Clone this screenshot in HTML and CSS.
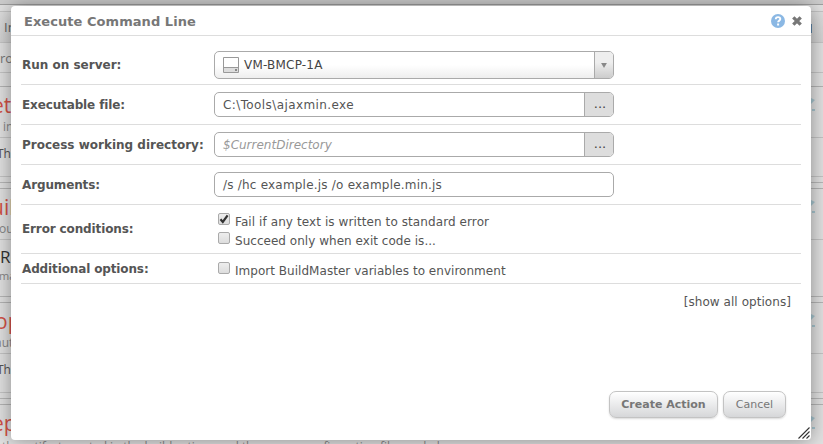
FILE: index.html
```
<!DOCTYPE html>
<html lang="en">
<head>
<meta charset="utf-8">
<title>Execute Command Line</title>
<link rel="stylesheet" href="styles.css">
</head>
<body>
<svg class="defs" width="0" height="0"><symbol id="edit" viewBox="0 0 12 14"><path d="M0 7l3-5 2-2 4 2-4 4-3 3z"/><path d="M3 11h2v2H3zM6 11h3v2H6z"/></symbol></svg>
<div class="page">
  <div class="strip"></div>
  <div class="gap"></div>
  <div class="nav"><span>In</span><i></i></div>
  <div class="crumb"><span>roc</span></div>
  <div class="space"></div>
  <section class="card"><header><h2 class="i0">et</h2><small class="in">in</small><svg class="edit"><use href="#edit"/></svg></header><p class="desc">The</p></section>
  <section class="card tall"><header><h2 class="i1">uild</h2><small>out</small><svg class="edit"><use href="#edit"/></svg></header><div class="detail"><b>Re</b><small>ma</small></div></section>
  <section class="card"><header><h2>op</h2><small class="i1">aut</small><svg class="edit"><use href="#edit"/></svg></header><p class="desc">The</p></section>
  <section class="card"><header><h2 class="i2">ep</h2><small class="last">the artifact created in the build actions and the source configuration files and plan</small><svg class="edit"><use href="#edit"/></svg></header></section>
</div>
<main class="dialog">
  <header class="title"><h1>Execute Command Line</h1>
    <svg class="help" viewBox="0 0 14 14"><circle cx="7" cy="7" r="7" fill="#8bb8e4"/><path d="M4.8 5.2c0-3 4.5-2.6 4.5-.1 0 1.6-2.2 1.5-2.2 3.2M6.1 10.5h2" fill="none" stroke="#fff" stroke-width="1.9"/></svg>
    <svg class="close" viewBox="0 0 10 10"><path d="M1.3 1.3l7.4 7.4M8.7 1.3L1.3 8.7" stroke="#777" stroke-width="3.3"/></svg>
  </header>
  <div class="form">
    <div class="row first"><label><span>Run on server:</span></label><div class="field select"><svg class="server" viewBox="0 0 16 16"><path d="M.5.5h15v15H.5z" fill="#fff" stroke="#999"/><path d="M1 11h14v4H1z" fill="#ddd"/><path d="M1 10.5h14" stroke="#999"/><path d="M12 12h2v2h-2z" fill="#888"/></svg><span class="server-name">VM-BMCP-1A</span><div class="arrow"><svg viewBox="0 0 7 6"><path d="M0 0h7L3.5 6z" fill="#888"/></svg></div></div></div>
    <div class="row"><label><span class="tight">Executable file:</span></label><div class="field"><span class="path">C:\Tools\ajaxmin.exe</span><div class="browse">...</div></div></div>
    <div class="row"><label><span>Process working directory:</span></label><div class="field"><em>$CurrentDirectory</em><div class="browse">...</div></div></div>
    <div class="row"><label><span class="tight">Arguments:</span></label><div class="field"><span class="args">/s /hc example.js /o example.min.js</span></div></div>
    <div class="row errors"><label><span class="tight">Error conditions:</span></label><div class="checks"><div class="check"><i><svg viewBox="0 0 10 10"><path d="M1.5 5.2l2.3 2.7L8.6 1.3" fill="none" stroke="#333" stroke-width="2.2"/></svg></i><span class="wide">Fail if any text is written to standard error</span></div><div class="check"><i></i><span>Succeed only when exit code is...</span></div></div></div>
    <div class="row options"><label><span class="tight">Additional options:</span></label><div class="checks"><div class="check"><i></i><span>Import BuildMaster variables to environment</span></div></div></div>
  </div>
  <div class="show"><span>[show all options]</span></div>
  <footer><button class="primary">Create Action</button><button class="cancel">Cancel</button></footer>
  <svg class="resize" viewBox="0 0 12 12"><path d="M.5 11.5l11-11M4.5 11.5l7-7M8.5 11.5l3-3" stroke="#333" stroke-width="1.1"/></svg>
</main>
</body>
</html>
```
FILE: styles.css
```
* { box-sizing: border-box; }
body { margin: 0; width: 823px; height: 444px; overflow: hidden; position: relative; font: 12px "DejaVu Sans", sans-serif; color: #555; background: #e2e2e2; }
h1, h2, p { margin: 0; font-weight: normal; }
.defs { position: absolute; }
.page { height: 444px; overflow: hidden; font-family: "Open Sans", sans-serif; }
.strip { height: 5px; background: #cdcdcd; border-bottom: 1px solid #a0a0a0; }
.gap { height: 7px; border-bottom: 1px solid #c4c4c4; }
.nav { height: 31px; background: linear-gradient(#dedede, #d3d3d3); border-bottom: 1px solid #c5c5c5; padding: 5px 0 0 4px; font-size: 13px; line-height: 20px; color: #666; display: flex; justify-content: space-between; }
.nav i { width: 12px; height: 9px; margin-top: 7px; background: linear-gradient(90deg, #5f86a8 1px, transparent 1px); }
.crumb { height: 30px; border-bottom: 1px solid #c5c5c5; padding-top: 6px; font-size: 13px; line-height: 18px; color: #777; }
.space { height: 13px; }
.card { height: 97px; border-top: 1px solid #b5b5b5; border-bottom: 1px solid #b8b8b8; margin-bottom: 5px; }
.card header { height: 51px; border-bottom: 1px solid #c5c5c5; position: relative; overflow: hidden; padding-top: 5px; }
.card h2 { font-size: 21px; line-height: 26px; color: #d45247; margin-left: -5px; }
.card h2.i0 { margin-left: -8px; }
.card h2.i1 { margin-left: -9px; }
.card h2.i2 { margin-left: -8px; }
.card small { display: block; font-size: 12px; line-height: 16px; margin: 1px 0 0 -1px; color: #888; }
.card small.in { margin-left: 3px; }
.card small.i1 { margin-left: -5px; }
.card small.last { margin: 3px 0 0 2px; font-size: 12px; letter-spacing: -.08px; white-space: nowrap; }
.edit { position: absolute; right: 5px; top: 11px; width: 12px; height: 14px; fill: #a8c6d0; }
.card .desc { height: 39px; border-bottom: 1px solid #c5c5c5; padding: 6px 0 0 0; margin-left: -3px; font-size: 12px; line-height: 20px; }
.card.tall { height: 109px; }
.detail { height: 51px; }
.detail b { display: block; font-weight: normal; font-size: 17px; line-height: 23px; padding-top: 5px; color: #333; }
.card .detail small { margin-top: 0; font-size: 11px; }
.dialog { position: absolute; left: 11px; top: 6px; width: 800px; height: 434px; background: #fff; border-radius: 4px; box-shadow: 0 0 20px rgba(0,0,0,.4); }
.title { height: 30px; border-bottom: 1px solid #ddd; display: flex; align-items: center; padding: 0 9px 0 13px; }
.title h1 { flex: 1; font-size: 13px; line-height: 20px; font-weight: bold; letter-spacing: .05px; padding-top: 2px; color: #777; }
.help { width: 14px; height: 14px; margin-right: 7px; }
.close { width: 10px; height: 10px; }
.form { margin: 0 10px; }
.row { height: 40px; display: flex; align-items: center; border-bottom: 1px solid #ddd; }
.row.first { height: 49px; padding-top: 9px; }
.row label { width: 193px; padding-left: 1px; font-size: 12px; font-weight: bold; line-height: 18px; white-space: nowrap; }
.tight { letter-spacing: -.13px; }
.row.errors { height: 49px; }
.row.options { height: 30px; }
.field { width: 400px; height: 25px; border: 1px solid #aaa; border-radius: 5px; display: flex; align-items: center; padding-left: 8px; background: #fff; overflow: hidden; white-space: nowrap; }
.field em { color: #999; }
.path { letter-spacing: .4px; }
.args { letter-spacing: .21px; }
.select { height: 28px; background: linear-gradient(#fff 50%, #eee); color: #444; }
.server { width: 16px; height: 16px; margin-right: 5px; }
.server-name { letter-spacing: .2px; padding-top: 1px; }
.arrow { width: 19px; height: 26px; margin-left: auto; border-left: 1px solid #aaa; background: linear-gradient(#eee 40%, #ccc); display: grid; place-items: center; }
.arrow svg { width: 6px; height: 5px; margin-top: 2px; }
.browse { width: 29px; height: 23px; margin-left: auto; padding-left: 2px; border-left: 1px solid #aaa; background: #ddd; text-align: center; line-height: 22px; font-size: 13px; color: #444; }
.checks { padding-left: 4px; }
.check { height: 19px; display: flex; align-items: flex-start; line-height: 19px; white-space: nowrap; }
.check span { padding-top: 3px; letter-spacing: .03px; }
.check span.wide { letter-spacing: .09px; }
.check i { width: 12px; height: 12px; border: 1px solid #aaa; border-radius: 2px; background: linear-gradient(#eee, #ddd); margin: 3px 5px 0 0; display: grid; place-items: center; }
.check i svg { width: 10px; height: 10px; }
.show { height: 36px; padding: 9px 20px 0 0; text-align: right; line-height: 18px; letter-spacing: .06px; }
footer { height: 27px; margin-top: 71px; display: flex; justify-content: flex-end; gap: 5px; padding-right: 25px; }
button { height: 27px; border: 1px solid #c3c3c3; border-radius: 7px; padding: 0; font: 11px "DejaVu Sans", sans-serif; color: #777; background: linear-gradient(#fff, #d6d7d9); box-shadow: 0 1px 2px rgba(0,0,0,.15); white-space: nowrap; }
.primary { width: 109px; font-weight: bold; }
.cancel { width: 63px; }
.resize { position: absolute; right: 1px; bottom: 1px; width: 12px; height: 12px; }
```
